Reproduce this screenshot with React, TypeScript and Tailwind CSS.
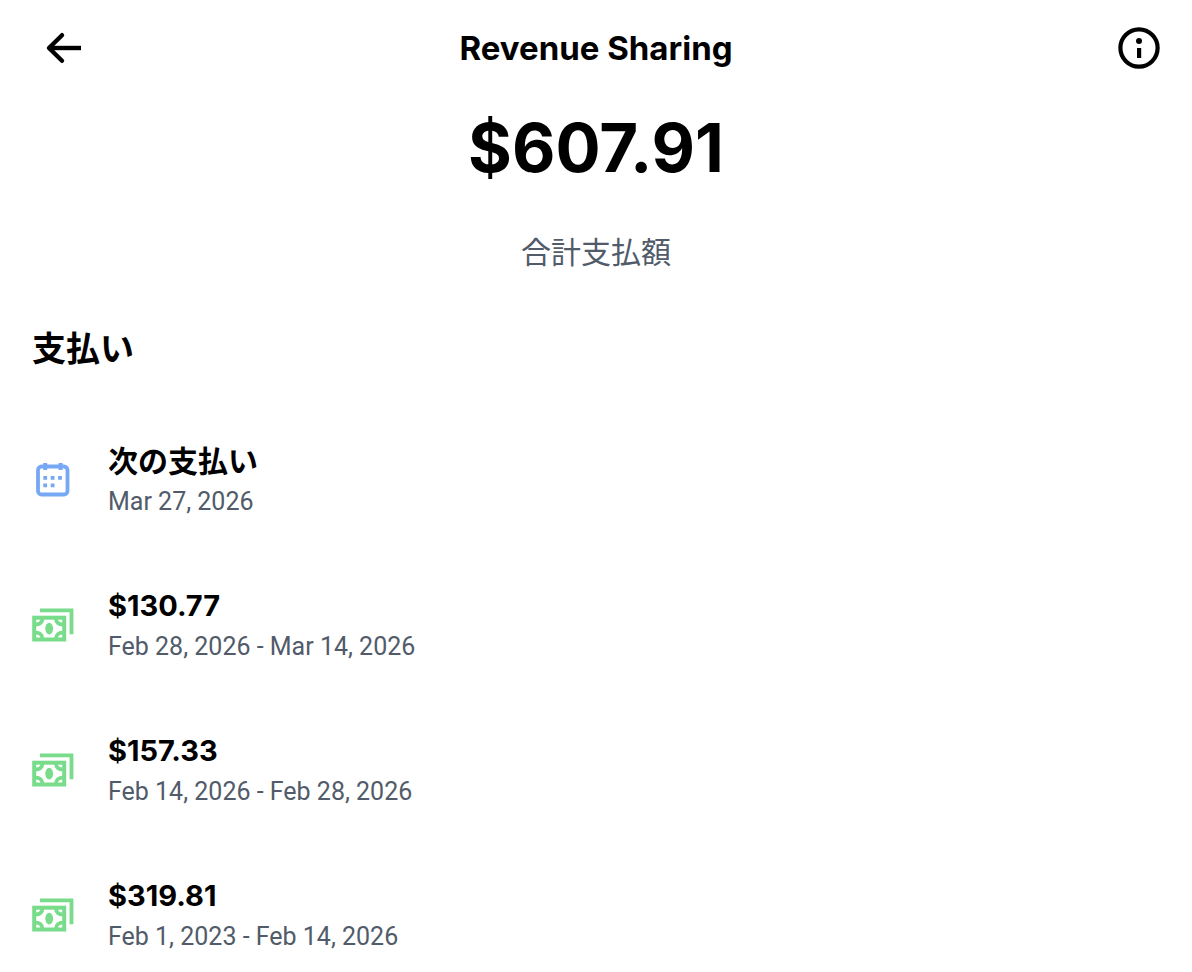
type Payout = {
  title: string;
  period: string;
  kind: "next" | "paid";
};

const payouts: Payout[] = [
  { title: "次の支払い", period: "Mar 27, 2026", kind: "next" },
  { title: "$130.77", period: "Feb 28, 2026 - Mar 14, 2026", kind: "paid" },
  { title: "$157.33", period: "Feb 14, 2026 - Feb 28, 2026", kind: "paid" },
  { title: "$319.81", period: "Feb 1, 2023 - Feb 14, 2026", kind: "paid" },
];

function BackIcon() {
  return (
    <svg viewBox="0 0 48 48" className="size-12" fill="none" stroke="currentColor" strokeWidth="4.4" aria-hidden="true">
      <path d="M41 24H9" />
      <path d="M22 11.2 9 24l13 12.8" strokeLinecap="round" strokeLinejoin="round" />
    </svg>
  );
}

function InfoIcon() {
  return (
    <svg viewBox="0 0 48 48" className="size-12" aria-hidden="true">
      <circle cx="23" cy="24" r="18.6" fill="none" stroke="currentColor" strokeWidth="4.2" />
      <circle cx="23" cy="17" r="3" fill="currentColor" />
      <path d="M21 24h4.2v10H21z" fill="currentColor" />
    </svg>
  );
}

function CalendarIcon() {
  return (
    <svg viewBox="1 1 44 44" className="size-11" aria-hidden="true">
      <rect x="7" y="8.5" width="29.5" height="28" rx="3.5" fill="none" stroke="currentColor" strokeWidth="3.8" />
      <path
        d="M12.2 5h4v7h-4zM27.6 5h4v7h-4zM12.3 18h3.8v3.8h-3.8zM19.7 18h3.8v3.8h-3.8zM27.1 18h3.8v3.8h-3.8zM12.3 25.4h3.8v3.8h-3.8zM19.7 25.4h3.8v3.8h-3.8z"
        fill="currentColor"
      />
    </svg>
  );
}

function CashIcon() {
  return (
    <svg viewBox="1 1 44 44" className="size-11" aria-hidden="true">
      <path d="M9 7.3h31.5v24" fill="none" stroke="currentColor" strokeWidth="3.8" />
      <rect x="3.2" y="14.7" width="30" height="21.8" fill="none" stroke="currentColor" strokeWidth="4" />
      <path
        d="M11.4 15.5c0 4-2.8 6-6.8 6M25 15.5c0 4 2.8 6 6.8 6M11.400 35.700c0-4-2.800-6-6.800-6M25 35.700c0-4 2.800-6 6.800-6"
        fill="none"
        stroke="currentColor"
        strokeWidth="3.8"
      />
      <ellipse cx="18.2" cy="25.6" rx="3.900" ry="5.800" fill="currentColor" />
    </svg>
  );
}

function PayoutRow({ payout }: { payout: Payout }) {
  const isNext = payout.kind === "next";
  return (
    <li className="flex items-center gap-8">
      <span className={isNext ? "text-[#77a8f3]" : "text-[#78dc8b]"}>{isNext ? <CalendarIcon /> : <CashIcon />}</span>
      <div>
        <h3 className={`leading-[42px] font-bold ${isNext ? "text-[30px]" : "text-[29px]"}`}>{payout.title}</h3>
        <p className="font-['Roboto',sans-serif] text-[25px] leading-10 text-[#515b69]">{payout.period}</p>
      </div>
    </li>
  );
}

export default function App() {
  return (
    <div className="min-h-screen bg-white font-['Inter','Noto_Sans_CJK_JP',sans-serif] text-black">
      <header className="grid h-24 grid-cols-[1fr_auto_1fr] items-center px-7">
        <button type="button" aria-label="Back" className="ml-3 justify-self-start">
          <BackIcon />
        </button>
        <h1 className="text-[33px] leading-10 font-bold">Revenue Sharing</h1>
        <button type="button" aria-label="Info" className="justify-self-end">
          <InfoIcon />
        </button>
      </header>

      <main>
        <section className="flex flex-col items-center gap-7 pt-2">
          <p className="text-[67px] leading-[88px] font-bold">$607.91</p>
          <p className="text-[30px] leading-[64px] text-[#515b69]">合計支払額</p>
        </section>

        <section className="px-8 pt-10">
          <h2 className="text-[34px] leading-[50px] font-bold">支払い</h2>
          <ul className="flex flex-col gap-[63px] pt-[66px]">
            {payouts.map((payout) => (
              <PayoutRow key={payout.period} payout={payout} />
            ))}
          </ul>
        </section>
      </main>
    </div>
  );
}
